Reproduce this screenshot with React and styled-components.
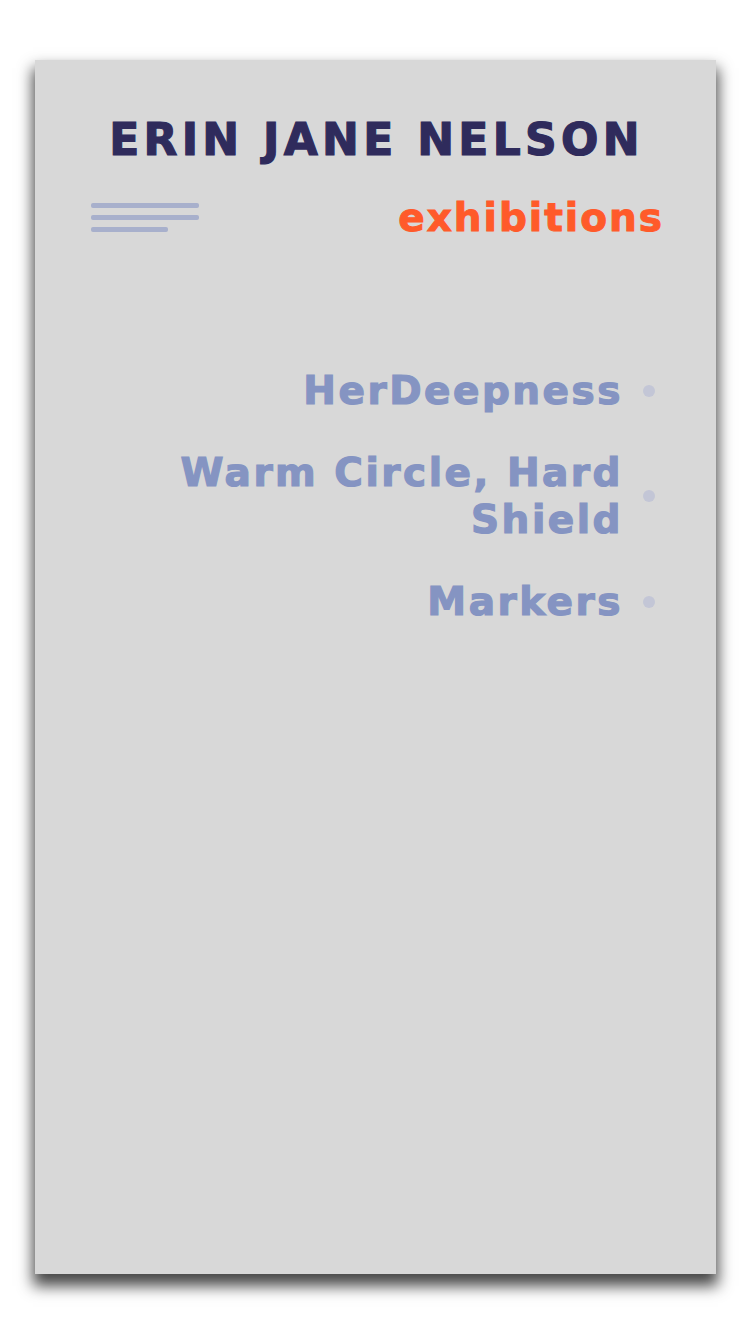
import React from 'react';
import styled, { createGlobalStyle } from 'styled-components';

const exhibitions = ['HerDeepness', 'Warm Circle, Hard Shield', 'Markers'];

export default function App() {
  return (
    <>
      <GlobalStyle />
      <Page>
        <Card>
          <Name>ERIN JANE NELSON</Name>
          <NavRow>
            <Burger aria-label="menu">
              <BurgerLine />
              <BurgerLine />
              <BurgerLine $short />
            </Burger>
            <Section>exhibitions</Section>
          </NavRow>
          <List>
            {exhibitions.map(title => (
              <Item key={title}>
                <ItemTitle>{title}</ItemTitle>
                <Dot />
              </Item>
            ))}
          </List>
        </Card>
      </Page>
    </>
  );
}

const GlobalStyle = createGlobalStyle`
  html, body {
    margin: 0;
    padding: 0;
    background: #fff;
  }
  * {
    box-sizing: border-box;
  }
`;

const Page = styled.div`
  width: 750px;
  height: 1334px;
  padding: 60px 34px 0 35px;
  font-family: 'DejaVu Sans', 'Liberation Sans', sans-serif;
`;

const Card = styled.div`
  width: 681px;
  height: 1214px;
  background: #d8d8d8;
  box-shadow: 0 10px 14px 2px rgba(0, 0, 0, 0.72);
  padding: 58px 54px 0 56px;
`;

const Name = styled.h1`
  margin: 0 -10px;
  text-align: center;
  font-size: 44px;
  line-height: 1;
  font-weight: 700;
  color: #2f2b5c;
  letter-spacing: 4.3px;
  -webkit-text-stroke: 1.2px #2f2b5c;
`;

const NavRow = styled.div`
  display: flex;
  justify-content: space-between;
  align-items: center;
  margin-top: 36px;
`;

const Burger = styled.div`
  display: flex;
  flex-direction: column;
  gap: 7px;
  width: 108px;
`;

const BurgerLine = styled.span`
  display: block;
  height: 5px;
  width: ${p => (p.$short ? '77px' : '108px')};
  background: #a8b0cc;
  border-radius: 2px;
`;

const Section = styled.div`
  font-size: 39px;
  line-height: 1;
  font-weight: 700;
  color: #ff5a2a;
  letter-spacing: 2px;
  margin-right: -2px;
  -webkit-text-stroke: 1px #ff5a2a;
`;

const List = styled.ul`
  list-style: none;
  margin: 130px 7px 0 0;
  padding: 0;
  display: flex;
  flex-direction: column;
  gap: 35px;
`;

const Item = styled.li`
  display: flex;
  justify-content: flex-end;
  align-items: center;
  gap: 20px;
`;

const ItemTitle = styled.span`
  max-width: 470px;
  text-align: right;
  font-size: 39px;
  line-height: 47px;
  font-weight: 700;
  color: #8594c2;
  letter-spacing: 2.5px;
  -webkit-text-stroke: 1.2px #8594c2;
`;

const Dot = styled.span`
  flex: none;
  width: 12px;
  height: 12px;
  border-radius: 50%;
  background: #c3c6d6;
`;
